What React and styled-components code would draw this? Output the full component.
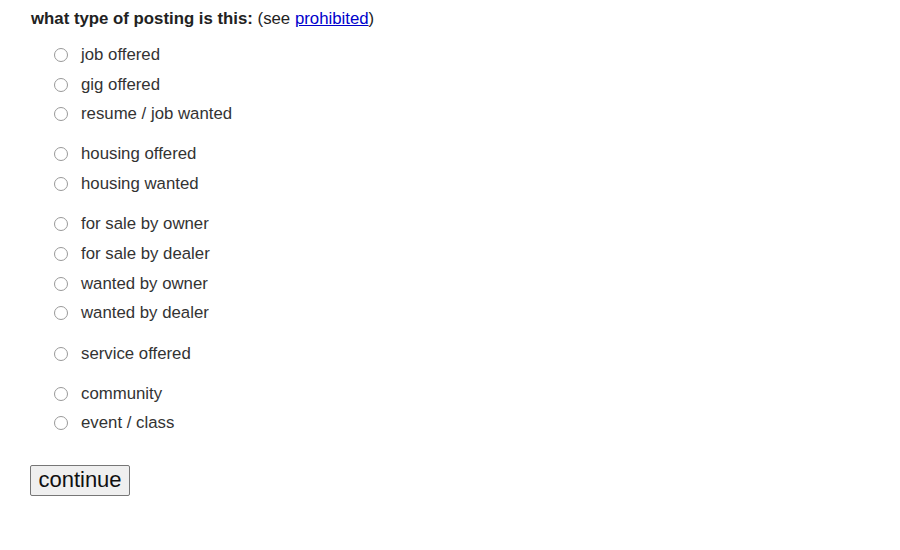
import React from 'react'
import styled, { createGlobalStyle } from 'styled-components'

const groups = [
  ['job offered', 'gig offered', 'resume / job wanted'],
  ['housing offered', 'housing wanted'],
  ['for sale by owner', 'for sale by dealer', 'wanted by owner', 'wanted by dealer'],
  ['service offered'],
  ['community', 'event / class'],
]

const App = () => (
  <Page>
    <GlobalStyle />
    <Heading>
      <b>what type of posting is this:</b> (see <a href="#">prohibited</a>)
    </Heading>
    {groups.map((group, i) => (
      <Group key={i}>
        {group.map((label) => (
          <Option key={label}>
            <Radio type="radio" name="type" />
            <span>{label}</span>
          </Option>
        ))}
      </Group>
    ))}
    <Button>continue</Button>
  </Page>
)

const GlobalStyle = createGlobalStyle`
  body {
    margin: 0;
    background: #fff;
    font-family: 'Liberation Sans', Arial, sans-serif;
  }
`

const Page = styled.div`
  padding: 8px 0 0 31px;
`

const Heading = styled.div`
  font-size: 16.8px;
  line-height: 22px;
  color: #222;
  margin-bottom: 10px;
  b {
    font-weight: bold;
  }
  a {
    color: #00c;
    text-decoration: underline;
  }
`

const Group = styled.div`
  display: flex;
  flex-direction: column;
  margin-bottom: 10.5px;
  padding-left: 23px;
`

const Option = styled.label`
  display: flex;
  align-items: center;
  height: 29.7px;
  font-size: 16.8px;
  color: #333;
`

const Radio = styled.input`
  appearance: none;
  width: 14px;
  height: 14px;
  margin: 0 13px 0 0;
  border: 1.5px solid #999;
  border-radius: 50%;
  background: #fff;
  box-sizing: border-box;
`

const Button = styled.button`
  margin-top: 16px;
  margin-left: -1px;
  font-family: 'Liberation Sans', Arial, sans-serif;
  font-size: 22px;
  color: #111;
  background: #efefef;
  border: 1px solid #767676;
  border-radius: 2px;
  padding: 1px 7px;
  height: 31px;
  width: 100px;
`

export default App
